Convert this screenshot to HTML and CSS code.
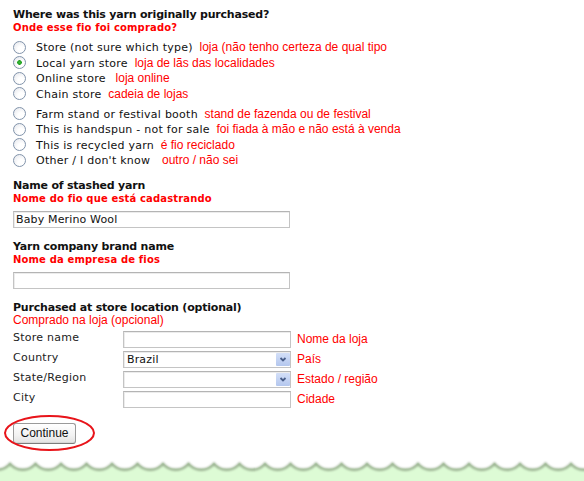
FILE: index.html
```html
<!DOCTYPE html>
<html lang="en">
<head>
  <meta charset="UTF-8">
  <meta name="viewport" content="width=device-width, initial-scale=1.0">
  <title>Add stashed yarn</title>
  <link rel="stylesheet" href="styles.css">
</head>
<body>
  <form class="stash-form">
    <div class="section">
      <h2 class="q">Where was this yarn originally purchased?</h2>
      <p class="q-pt">Onde esse fio foi comprado?</p>
      <ul class="choices">
        <li><label><input type="radio" name="source">Store (not sure which type) <span class="pt">loja (não tenho certeza de qual tipo</span></label></li>
        <li><label><input type="radio" name="source" checked>Local yarn store <span class="pt">loja de lãs das localidades</span></label></li>
        <li><label><input type="radio" name="source">Online store <span class="pt wide">loja online</span></label></li>
        <li><label><input type="radio" name="source">Chain store <span class="pt">cadeia de lojas</span></label></li>
      </ul>
      <ul class="choices second">
        <li><label><input type="radio" name="source">Farm stand or festival booth <span class="pt">stand de fazenda ou de festival</span></label></li>
        <li><label><input type="radio" name="source">This is handspun - not for sale <span class="pt">foi fiada à mão e não está à venda</span></label></li>
        <li><label><input type="radio" name="source">This is recycled yarn <span class="pt">é fio reciclado</span></label></li>
        <li><label><input type="radio" name="source">Other / I don't know <span class="pt wider">outro / não sei</span></label></li>
      </ul>
    </div>

    <div class="section after-list">
      <h2 class="q">Name of stashed yarn</h2>
      <p class="q-pt">Nome do fio que está cadastrando</p>
      <input type="text" class="field long" value="Baby Merino Wool">
    </div>

    <div class="section">
      <h2 class="q">Yarn company brand name</h2>
      <p class="q-pt">Nome da empresa de fios</p>
      <input type="text" class="field long">
    </div>

    <div class="section">
      <h2 class="q">Purchased at store location (optional)</h2>
      <p class="q-pt light">Comprado na loja (opcional)</p>
      <div class="location">
        <span class="loc-label">Store name</span>
        <input type="text" class="field">
        <span class="pt loc-pt">Nome da loja</span>

        <span class="loc-label">Country</span>
        <span class="select-wrap">
          <select class="field">
            <option selected>Brazil</option>
            <option>Portugal</option>
          </select>
          <svg class="drop" width="14" height="13" viewBox="0 0 14 13"><path d="M4.5 5 L7 7.5 L9.5 5" fill="none" stroke="#4a5f8a" stroke-width="1.8"/></svg>
        </span>
        <span class="pt loc-pt">País</span>

        <span class="loc-label">State/Region</span>
        <span class="select-wrap">
          <select class="field">
            <option></option>
          </select>
          <svg class="drop" width="14" height="13" viewBox="0 0 14 13"><path d="M4.5 5 L7 7.5 L9.5 5" fill="none" stroke="#4a5f8a" stroke-width="1.8"/></svg>
        </span>
        <span class="pt loc-pt">Estado / região</span>

        <span class="loc-label">City</span>
        <input type="text" class="field">
        <span class="pt loc-pt">Cidade</span>
      </div>
    </div>

    <div class="actions">
      <button type="submit" class="btn">Continue</button>
      <span class="circled"></span>
    </div>
  </form>

  <footer class="scallops">
    <svg width="584" height="26" viewBox="0 0 584 26">
      <defs>
        <filter id="soft" x="-5%" y="-50%" width="110%" height="200%">
          <feGaussianBlur stdDeviation="0.9"/>
        </filter>
      </defs>
      <path fill="#ddfbd5" d="M-15.5 7.7 a16.5 16.5 0 0 0 25.5 0 a16.5 16.5 0 0 0 25.5 0 a16.5 16.5 0 0 0 25.5 0 a16.5 16.5 0 0 0 25.5 0 a16.5 16.5 0 0 0 25.5 0 a16.5 16.5 0 0 0 25.5 0 a16.5 16.5 0 0 0 25.5 0 a16.5 16.5 0 0 0 25.5 0 a16.5 16.5 0 0 0 25.5 0 a16.5 16.5 0 0 0 25.5 0 a16.5 16.5 0 0 0 25.5 0 a16.5 16.5 0 0 0 25.5 0 a16.5 16.5 0 0 0 25.5 0 a16.5 16.5 0 0 0 25.5 0 a16.5 16.5 0 0 0 25.5 0 a16.5 16.5 0 0 0 25.5 0 a16.5 16.5 0 0 0 25.5 0 a16.5 16.5 0 0 0 25.5 0 a16.5 16.5 0 0 0 25.5 0 a16.5 16.5 0 0 0 25.5 0 a16.5 16.5 0 0 0 25.5 0 a16.5 16.5 0 0 0 25.5 0 a16.5 16.5 0 0 0 25.5 0 a16.5 16.5 0 0 0 25.5 0 L600 26 L-15.5 26 Z"/>
      <path fill="none" stroke="#98ad8f" stroke-width="2.4" filter="url(#soft)" transform="translate(0 1)" d="M-15.5 7.7 a16.5 16.5 0 0 0 25.5 0 a16.5 16.5 0 0 0 25.5 0 a16.5 16.5 0 0 0 25.5 0 a16.5 16.5 0 0 0 25.5 0 a16.5 16.5 0 0 0 25.5 0 a16.5 16.5 0 0 0 25.5 0 a16.5 16.5 0 0 0 25.5 0 a16.5 16.5 0 0 0 25.5 0 a16.5 16.5 0 0 0 25.5 0 a16.5 16.5 0 0 0 25.5 0 a16.5 16.5 0 0 0 25.5 0 a16.5 16.5 0 0 0 25.5 0 a16.5 16.5 0 0 0 25.5 0 a16.5 16.5 0 0 0 25.5 0 a16.5 16.5 0 0 0 25.5 0 a16.5 16.5 0 0 0 25.5 0 a16.5 16.5 0 0 0 25.5 0 a16.5 16.5 0 0 0 25.5 0 a16.5 16.5 0 0 0 25.5 0 a16.5 16.5 0 0 0 25.5 0 a16.5 16.5 0 0 0 25.5 0 a16.5 16.5 0 0 0 25.5 0 a16.5 16.5 0 0 0 25.5 0 a16.5 16.5 0 0 0 25.5 0"/>
    </svg>
  </footer>
</body>
</html>
```

FILE: styles.css
```css
html, body {
  height: 100%;
}
body {
  margin: 0;
  font-family: "DejaVu Sans", Verdana, sans-serif;
  font-size: 11px;
  letter-spacing: 0.25px;
  color: #111;
  background: #fff;
  display: flex;
  flex-direction: column;
  overflow: hidden;
}
.stash-form {
  padding: 8px 0 0 13px;
}
.section {
  margin-top: 12px;
}
.section:first-child {
  margin-top: 0;
}
.section.after-list {
  margin-top: 10px;
}
.q {
  margin: 0;
  font-size: 11px;
  line-height: 13px;
  font-weight: bold;
  letter-spacing: -0.2px;
  color: #111;
}
.q-pt {
  margin: 0 0 6px 0;
  font-size: 10px;
  line-height: 13px;
  font-weight: bold;
  letter-spacing: 0.15px;
  color: #f00;
}
.q-pt.light {
  font-family: "Liberation Sans", Arial, sans-serif;
  font-size: 12px;
  font-weight: normal;
  letter-spacing: 0;
  margin-bottom: 4px;
}
.pt {
  font-family: "Liberation Sans", Arial, sans-serif;
  font-size: 12px;
  letter-spacing: 0;
  color: #f00;
  margin-left: 3px;
}
.pt.wide {
  margin-left: 6px;
}
.pt.wider {
  margin-left: 8px;
}

/* radio list */
.choices {
  list-style: none;
  margin: 0;
  padding: 0;
}
.choices.second {
  margin-top: 4.5px;
}
.choices li {
  height: 15.5px;
  line-height: 15.5px;
}
.choices label {
  display: flex;
  align-items: center;
  white-space: pre;
}
input[type="radio"] {
  -webkit-appearance: none;
  appearance: none;
  width: 13px;
  height: 13px;
  margin: -1px 10px 0 0;
  border: 1px solid #8294ab;
  border-radius: 50%;
  background: radial-gradient(circle at 65% 70%, #ffffff 30%, #e2e4ea 100%);
  box-sizing: border-box;
  flex: none;
}
input[type="radio"]:checked {
  background:
    radial-gradient(circle at 50% 50%, #3dbb3d 0, #21a121 2px, transparent 2.6px),
    radial-gradient(circle at 65% 70%, #ffffff 30%, #e2e4ea 100%);
}

/* text fields */
.field {
  height: 17px;
  box-sizing: border-box;
  border: 1px solid #c4c4c4;
  border-top-color: #b4b4b4;
  box-shadow: inset 1px 1px 0 #ececec;
  padding: 0 2px;
  font-family: "DejaVu Sans", Verdana, sans-serif;
  font-size: 11px;
  letter-spacing: 0.15px;
  color: #111;
  background: #fff;
  display: block;
  outline: none;
}
.field.long {
  width: 277px;
}

/* location table */
.location {
  display: grid;
  grid-template-columns: 104px 168px auto;
  column-gap: 6px;
  row-gap: 3px;
  align-items: center;
}
.location .field {
  width: 168px;
}
.loc-label {
  align-self: start;
  line-height: 13px;
  color: #222;
}
.loc-pt {
  margin-left: 0;
  line-height: 14px;
}
.select-wrap {
  position: relative;
  display: block;
}
.select-wrap select {
  -webkit-appearance: none;
  appearance: none;
  padding-left: 3px;
}
.drop {
  position: absolute;
  right: 1px;
  top: 2px;
  background: linear-gradient(#d3dff8, #b4c7ee);
  border-radius: 1px;
}

/* continue */
.actions {
  position: relative;
  margin-top: 15px;
  width: 63px;
}
.btn {
  width: 63px;
  height: 21px;
  display: block;
  font-family: "Liberation Sans", Arial, sans-serif;
  font-size: 12px;
  color: #111;
  background: linear-gradient(#ffffff, #f2f2f2 60%, #e2e2e2);
  border: 1px solid #9a9a9a;
  border-bottom-color: #7c7c7c;
  border-radius: 3px;
  box-shadow: inset 0 -1px 0 #d6d6d6;
  padding: 0;
}
.circled {
  position: absolute;
  left: -9px;
  top: -8px;
  width: 91px;
  height: 36px;
  box-sizing: border-box;
  border: 2px solid #e8141a;
  border-radius: 50%;
  pointer-events: none;
}

/* footer */
.scallops {
  margin-top: auto;
  height: 26px;
  flex: none;
}
.scallops svg {
  display: block;
}
```
